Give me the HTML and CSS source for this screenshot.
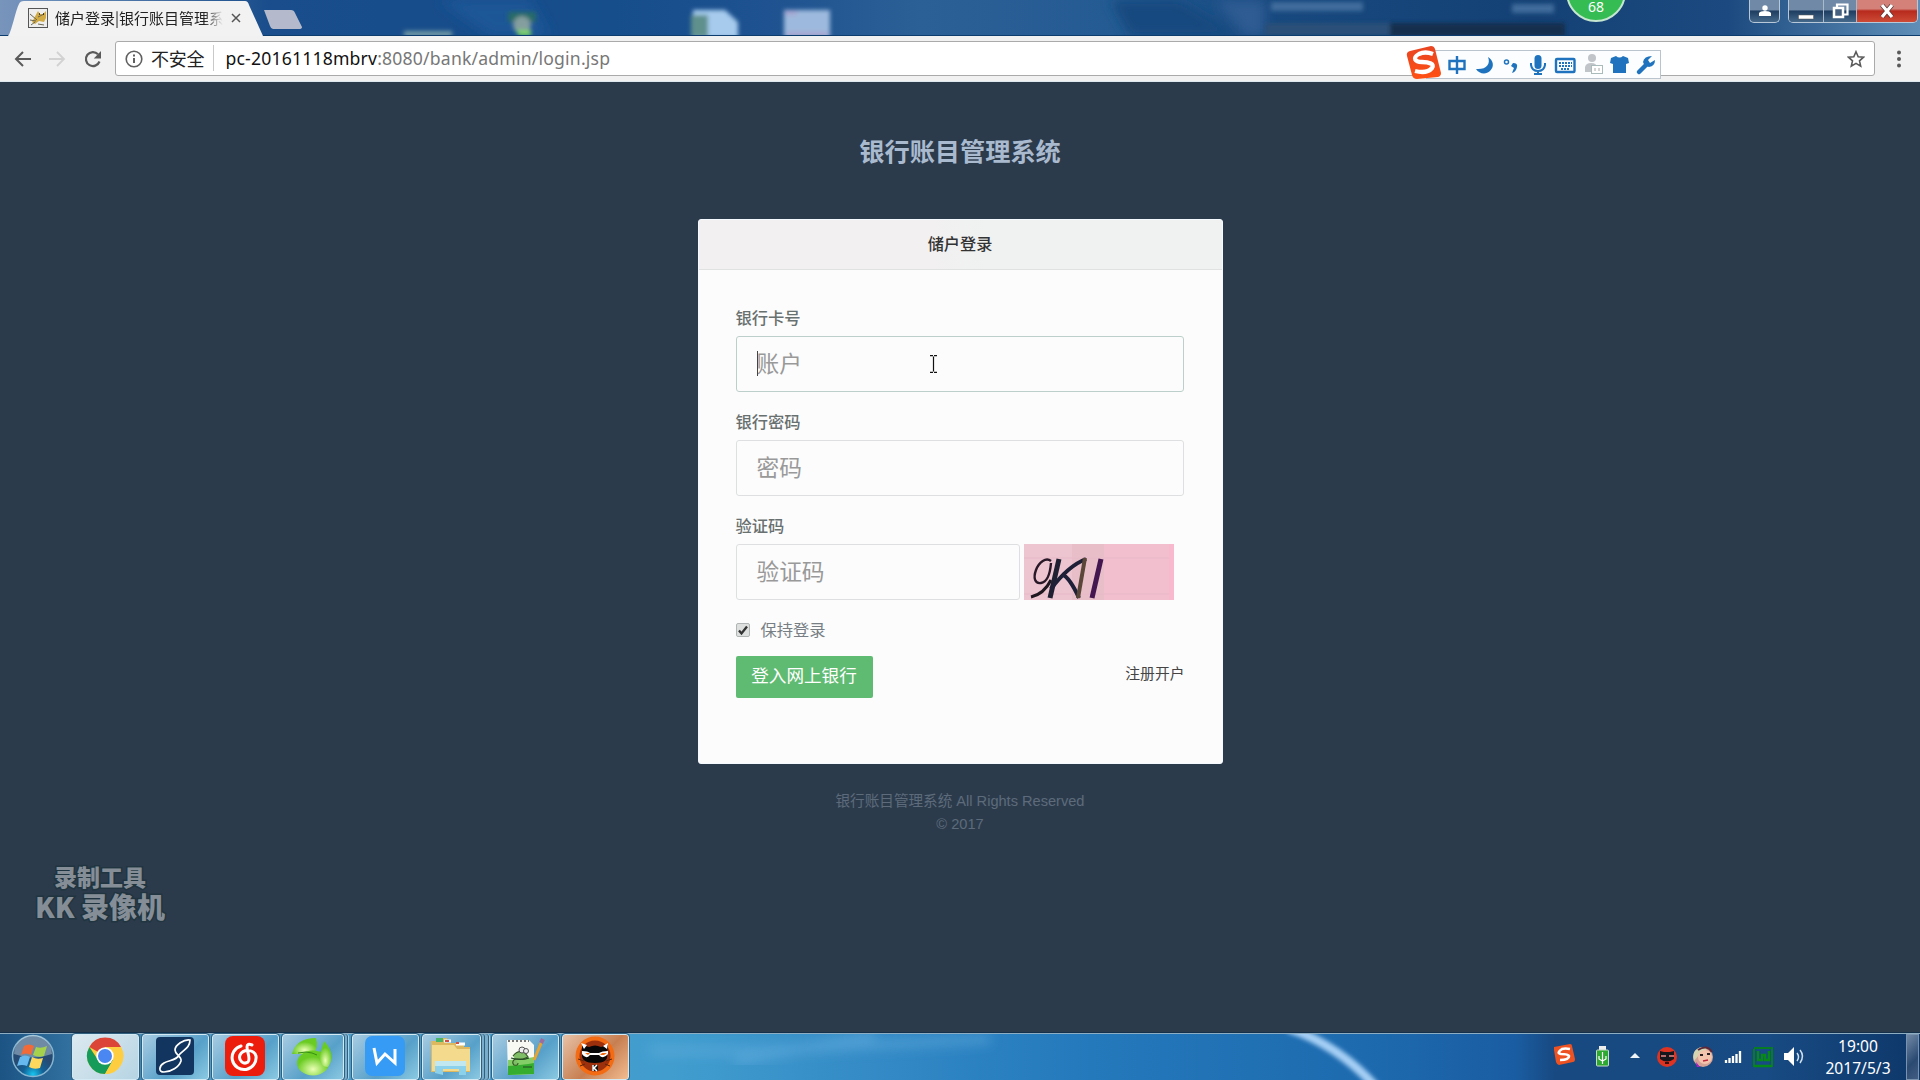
FILE: index.html
```html
<!DOCTYPE html>
<html lang="zh-CN">
<head>
<meta charset="utf-8">
<title>储户登录|银行账目管理系统</title>
<link rel="stylesheet" href="styles.css">
</head>
<body>
<header class="tabstrip">
  <svg class="strip-art" width="1920" height="36" viewBox="0 0 1920 36">
    <defs>
      <linearGradient id="sky"><stop offset="0" stop-color="#7894bb"/><stop offset=".02" stop-color="#6c8eba"/><stop offset=".14" stop-color="#194d8b"/><stop offset=".32" stop-color="#164d8b"/><stop offset=".4" stop-color="#1e5290"/><stop offset=".48" stop-color="#2b6096"/><stop offset=".58" stop-color="#245b92"/><stop offset=".66" stop-color="#17497f"/><stop offset=".8" stop-color="#144175"/><stop offset=".9" stop-color="#1c4a80"/><stop offset="1" stop-color="#5f8fb8"/></linearGradient>
      <filter id="soft"><feGaussianBlur stdDeviation="2"/></filter>
      <filter id="softer"><feGaussianBlur stdDeviation="6"/></filter>
    </defs>
    <rect width="1920" height="36" fill="url(#sky)"/>
    <g filter="url(#softer)">
      <path d="M440 0h90l20 36h-60z" fill="#1d5797"/>
      <path d="M1110 0h70l60 36h-110z" fill="#12497f"/>
      <path d="M1215 0h50v36h-20z" fill="#2d5b93"/>
    </g>
    <g filter="url(#soft)">
      <rect x="404" y="31" width="48" height="6" fill="#7098a5"/>
      <rect x="508" y="12" width="28" height="10" fill="#286a68"/>
      <circle cx="522" cy="25" r="9" fill="#849e9f"/>
      <path d="M516 30h15v6h-12z" fill="#7bd267"/>
      <path d="M693 10h32l13 12v16h-45z" fill="#a6cbed"/>
      <path d="M691 15h17v22h-17z" fill="#5f908c"/>
      <rect x="784" y="10" width="46" height="28" fill="#9db9dd"/>
      <path d="M785 13h12M786 34h42" stroke="#ae9ccc" stroke-width="3"/>
      <path d="M1271 2h92v9h-92zM1512 4h42v9h-42z" fill="#3f6c9b"/>
      <rect x="1265" y="23" width="125" height="13" fill="#2a5078"/>
      <rect x="1390" y="23" width="175" height="14" fill="#152d4e"/>
    </g>
    <rect y="35" width="1920" height="1" fill="#0d3d6f"/>
    <path d="M8 36C11 34 16 9 19 4Q20 1 24 1H245Q248 1 249 5L263 36z" fill="#f2f2f2"/>
    <path d="M264 10h27q3 0 4 3l7 14q0 2-3 2h-26q-2 0-3-3z" fill="#b4bacb"/>
  </svg>
  <div class="tab">
    <svg width="20" height="20" viewBox="0 0 20 20"><rect x=".5" y=".5" width="19" height="19" fill="#eee" stroke="#555"/><path d="M10 3l2 3h3l3-3v7l-2 4-5-1-4 3-3-2z" fill="#d3ab45"/><path d="M2 6l7 6M2 12l6 1M3 17l4-3M10 16l6 1M10 9l6-3" fill="none" stroke="#6a6650"/><path d="M11 6h1M15 6h1" stroke="#222" stroke-width="1.500"/></svg>
    <span class="tab-title">储户登录|银行账目管理系</span>
    <svg class="tab-close" width="10" height="10" viewBox="0 0 10 10"><path d="M1 1l8 8M9 1l-8 8" stroke="#555" stroke-width="1.5"/></svg>
  </div>
  <div class="ball">68</div>
  <div class="window-buttons">
    <div class="wb user"><svg width="12" height="12" viewBox="0 0 12 12"><circle cx="6" cy="3" r="2.7" fill="#fff"/><path d="M0 11V8q1-2 6-2t6 2v3z" fill="#fff"/></svg></div>
    <div class="wb-group">
      <div class="wb min"><svg width="16" height="12" viewBox="0 0 16 12"><rect x=".5" y="7" width="15" height="4" fill="#fff" stroke="#555" stroke-width=".5"/></svg></div>
      <div class="wb restore"><svg width="17" height="16" viewBox="0 0 17 16"><path d="M5 4V1.5h10.5v10H12" fill="none" stroke="#fff" stroke-width="2.2"/><rect x="2" y="5" width="9" height="9" fill="#45617f" stroke="#fff" stroke-width="2.5"/></svg></div>
      <div class="wb close"><svg width="16" height="14" viewBox="0 0 16 14"><path d="M3 1l10 12M13 1L3 13" stroke="#533" stroke-width="4.6"/><path d="M3 1l10 12M13 1L3 13" stroke="#fff" stroke-width="3.2"/></svg></div>
    </div>
  </div>
</header>
<nav class="toolbar">
  <svg width="18" height="16" viewBox="0 0 18 16"><path d="M17 8H2M9 1L2 8l7 7" fill="none" stroke="#5a5a5a" stroke-width="2"/></svg>
  <svg class="forward" width="18" height="16" viewBox="0 0 18 16"><path d="M1 8h15M9 1l7 7-7 7" fill="none" stroke="#d2d2d2" stroke-width="1.8"/></svg>
  <svg class="reload" width="18" height="18" viewBox="0 0 18 18"><path d="M15.5 11.5A7 7 0 1 1 14 4.2" fill="none" stroke="#5a5a5a" stroke-width="2.2"/><path d="M17 1v7.5H9.8z" fill="#5a5a5a"/></svg>
  <div class="address">
    <svg width="18" height="18" viewBox="0 0 18 18"><circle cx="9" cy="9" r="7.8" fill="none" stroke="#606060" stroke-width="1.6"/><path d="M9 8v5M9 4.5v2" stroke="#606060" stroke-width="2"/></svg>
    <span class="insecure">不安全</span>
    <span class="url"><b>pc-20161118mbrv</b>:8080/bank/admin/login.jsp</span>
    <svg class="star" width="18" height="18" viewBox="0 0 18 18"><path d="M9 1.7l2.2 5 5.3.5-4 3.6 1.2 5.4L9 13.4l-4.7 2.8 1.2-5.4-4-3.6 5.3-.5z" fill="none" stroke="#5a5a5a" stroke-width="1.6"/></svg>
  </div>
  <svg class="menu-dots" width="4" height="18" viewBox="0 0 4 18"><g fill="#5a5a5a"><circle cx="2" cy="2.5" r="2"/><circle cx="2" cy="9" r="2"/><circle cx="2" cy="15.5" r="2"/></g></svg>
  <div class="ime">
    <svg width="256" height="36" viewBox="0 0 256 36">
      <defs><linearGradient id="sg" x2="0" y2="1"><stop stop-color="#e84522" offset="0"/><stop stop-color="#ff5014" offset="1"/></linearGradient></defs>
      <rect x="20.500" y="5.500" width="234" height="28" fill="#fbfdff" stroke="#b9c4cf"/>
      <path d="M4 6L25 1q3 0 4 3l6 24q0 3-3 4L11 34q-4 0-5-4L1 11q-1-4 3-5z" fill="url(#sg)"/>
      <path d="M27 9q-8-3-14 0c-7 4-4 8 3 8s13 2 10 6q-5 6-17 3" fill="none" stroke="#fff" stroke-width="4.300"/>
      <g fill="none" stroke="#1f73be" stroke-width="2.400">
        <path d="M43.500 16h15v8h-15zM51 11v18"/>
        <path d="M125 18v2q1 6 7 6t7-6v-2M132 26v3M128 29h8" stroke-width="2"/>
        <rect x="150" y="14" width="18.500" height="13" rx="1"/>
      </g>
      <path d="M82 12c3 7-2 13-12 12 3 5 10 6 14 2 5-5 3-11-2-14z" fill="#1f73be"/>
      <circle cx="100.500" cy="17" r="2" fill="none" stroke="#1f73be" stroke-width="1.500"/><path d="M107 18q5 0 4 4-1 5-5 6l2-5-3-2z" fill="#1f73be"/>
      <rect x="128.500" y="10" width="7" height="14" rx="3.500" fill="#1f73be"/>
      <path d="M153 18h13M153 21h13M155 24h9" stroke="#1f73be" stroke-width="2" stroke-dasharray="2 1"/>
      <circle cx="186" cy="13" r="4" fill="#c1c4c9"/><path d="M179 27v-5q1-4 6-4 6 0 6 5v4z" fill="#c1c4c9"/><rect x="185.500" y="20.500" width="11" height="8" fill="#fff" stroke="#abb"/><path d="M189 23v3M193 23v3" stroke="#aaa"/>
      <path d="M205 13l5-2q3.500 3 7 0l5 2 1 5-3 1v9h-13v-9l-3-1z" fill="#1f73be"/>
      <path d="M233 27l8-8" stroke="#1f73be" stroke-width="4.500" stroke-linecap="round"/><path d="M246 11l-4 4 2 3 5-3q0 6-6 7-5-1-6-5 1-6 9-6z" fill="#1f73be"/>
    </svg>
  </div>
</nav>
<main class="page">
  <h1>银行账目管理系统</h1>
  <section class="card">
    <div class="card-head">储户登录</div>
    <form class="card-body">
      <label class="field-label">银行卡号</label>
      <div class="field focused"><i class="caret"></i>账户
        <svg class="ibeam" width="9" height="18" viewBox="0 0 9 18"><path d="M1 .7h3M5 .7h3M4.500 1.500v15M1 17.300h3M5 17.300h3" stroke="#111" stroke-width="1.200"/></svg>
      </div>
      <label class="field-label">银行密码</label>
      <div class="field">密码</div>
      <label class="field-label">验证码</label>
      <div class="code-row">
        <div class="field">验证码</div>
        <svg width="150" height="56" viewBox="0 0 150 56"><rect width="150" height="56" fill="#f2bfce"/><path d="M0 0h78v56H0z" fill="#ecc5d0"/><path d="M48 0h32v56H48z" fill="#e8bfc8"/><path d="M0 14h150M0 50h150" fill="none" stroke="#e8b8c8"/><path d="M145 0h5v56h-5z" fill="#f8b8cd"/>
          <path d="M27 17C22 13 15 18 12 26S11 40 17 39s9-8 10-20" fill="none" stroke="#291827" stroke-width="2.400"/><path d="M7 53Q20 50 27 36" fill="none" stroke="#201820" stroke-width="3"/><path d="M35 15L26 54" stroke="#202033" stroke-width="5"/><path d="M62 15Q44 22 27 45M38 30Q46 34 55 54" fill="none" stroke="#1e2038" stroke-width="4"/><path d="M61 14L54 54" stroke="#5a4638" stroke-width="4"/><path d="M77 15L68 54" stroke="#431650" stroke-width="5"/></svg>
      </div>
      <div class="remember"><svg width="14" height="14" viewBox="0 0 14 14"><rect x=".5" y=".5" width="13" height="13" rx="1.500" fill="#dedfdf" stroke="#b2b5b5"/><path d="M3 7.500l2.500 3L11 3.500" fill="none" stroke="#333" stroke-width="2.300"/></svg><span>保持登录</span></div>
      <div class="actions"><div class="submit">登入网上银行</div><a class="register">注册开户</a></div>
    </form>
  </section>
  <footer class="copyright"><div class="rights">银行账目管理系统 All Rights Reserved</div><div>© 2017</div></footer>
  <div class="watermark"><div class="wm-small">录制工具</div><div class="wm-big">KK 录像机</div></div>
</main>
<div class="taskbar">
  <svg class="bar-art" width="1920" height="48" viewBox="0 0 1920 48">
    <defs><linearGradient id="bar"><stop offset="0" stop-color="#1c5484"/><stop offset=".035" stop-color="#306f9e"/><stop offset=".1" stop-color="#4f9cc7"/><stop offset=".35" stop-color="#419dce"/><stop offset=".45" stop-color="#348bc6"/><stop offset=".56" stop-color="#247abc"/><stop offset=".72" stop-color="#1d69ae"/><stop offset=".79" stop-color="#1a5ca1"/><stop offset=".81" stop-color="#184981"/><stop offset=".92" stop-color="#184b83"/><stop offset="1" stop-color="#0d376a"/></linearGradient></defs>
    <rect width="1920" height="48" fill="url(#bar)"/>
    <path d="M735 30L875 2M650 19h100l240-12" fill="none" stroke="#66afe0" stroke-opacity=".5" stroke-width="9" filter="url(#softer)"/>
    <path d="M1288 -4Q1338 13 1375 54" fill="none" stroke="#a5cff5" stroke-width="9" filter="url(#soft)"/>
    <rect width="1920" height="1" fill="#14304b"/><rect y="1" width="1920" height="1" fill="#8eadc1"/>
  </svg>
  <div class="launch">
    <svg class="orb" width="44" height="44" viewBox="0 0 44 44"><defs><radialGradient id="orb" cy=".95"><stop offset="0" stop-color="#17c5ef"/><stop offset=".5" stop-color="#126197"/><stop offset="1" stop-color="#264a72"/></radialGradient></defs><circle cx="22" cy="22" r="20.500" fill="url(#orb)" stroke="#86b5d0" stroke-width="1.500"/><path d="M3 20a19 19 0 0 1 38 0q-19 7-38 0z" fill="#dceaf1" opacity=".4"/><path d="M13 12q5-3 10 0l-3 9q-5-3-10 0z" fill="#f26a37"/><path d="M25 13q5 2 11-1l-3 10q-6 2-11-1z" fill="#a5d14c"/><path d="M9 23q5-3 10 0l-3 9q-5-2-10 0z" fill="#66b9ee"/><path d="M21 23q5 3 11 1l-3 10q-6 2-11-1z" fill="#fed85c"/></svg>
    <div class="task active"><svg width="38" height="38" viewBox="0 0 38 38"><circle cx="19" cy="19" r="18" fill="#ffce40"/><path d="M19 19L3.400 10A18 18 0 0 1 35 10H19z" fill="#db4437"/><path d="M3.400 10A18 18 0 0 0 19 37l8-14-15 0z" fill="#169b59"/><path d="M19 10h16A18 18 0 0 1 19 37l8-14z" fill="#ffce40"/><circle cx="19" cy="19" r="8.700" fill="#fff"/><circle cx="19" cy="19" r="7" fill="#4a87f2"/></svg></div>
    <div class="task"><svg width="38" height="38" viewBox="0 0 38 38"><rect width="38" height="38" rx="4" fill="#12355f"/><path d="M34 3C28 2 19 8 19 13c0 5 7 6 6 11-2 6-10 11-17 11-6 0-5-6 0-9 5-3 12-2 15-8 4-5 11-7 11-15z" fill="none" stroke="#fff" stroke-width="1.700"/></svg></div>
    <div class="task"><svg width="40" height="40" viewBox="0 0 40 40"><rect width="40" height="40" rx="8" fill="#ed1d0d"/><path d="M16 10A12 12 0 1 0 31 20c-2-7-13-7-16-1-2 6 4 10 8 7 3-3-1-10-1-15q0-4 5-2" fill="none" stroke="#fff" stroke-width="3" stroke-linecap="round"/></svg></div>
    <div class="task stacked"><svg width="40" height="40" viewBox="0 0 40 40"><defs><radialGradient id="lime" cy=".75"><stop stop-color="#eaffb5"/><stop offset="1" stop-color="#6acb22"/></radialGradient></defs><path d="M0 18Q4 2 24 2q3 10-3 16Z" fill="url(#lime)"/><ellipse cx="21" cy="27" rx="16" ry="12.500" fill="url(#lime)"/><path d="M32 5q13 14 4 26-8 0-9-10z" fill="url(#lime)"/><path d="M6 17Q15 15 20 17l5 2" fill="none" stroke="#368d13"/></svg></div>
    <div class="task"><svg width="40" height="40" viewBox="0 0 40 40"><rect width="40" height="40" rx="7" fill="#369bf5"/><path d="M9 12l3 15 8-9 10 9V13" fill="none" stroke="#fff" stroke-width="3"/></svg></div>
    <div class="task stacked double"><svg width="40" height="40" viewBox="0 0 40 40"><path d="M0 5h6l2-3h8v5h17v4h6v25H0z" fill="#ddb85f"/><path d="M5 2h7v4H5z" fill="#49b568"/><path d="M13 5h7M25 8h9" stroke="#fff" stroke-width="3"/><path d="M14 5h4M25 7h3" stroke="#d35044" stroke-width="2"/><path d="M1 9h22l3 4h13v22H1z" fill="#f3da8d"/><path d="M4 37V25h31v14h-7v-6H12v6z" fill="#8bd1ec"/><path d="M4 25h31v5H4z" fill="#c1e7f0"/></svg></div>
    <div class="task"><svg width="40" height="40" viewBox="0 0 40 40"><path d="M2 4h22l5 5v29l-26 1z" fill="#f8f9f3"/><path d="M3 24q15-1 26-3v17l-26 1z" fill="#83ce66"/><path d="M3 30q15-1 26-3v11l-26 1z" fill="#36ad2f"/><path d="M3 5h21" stroke="#777" stroke-width="2" stroke-dasharray="2 2"/><path d="M8 20q5-7 12-3l3 4-5 2H10q-4 3-1 6 4 1 4-2" fill="#80bd67" stroke="#345a25" stroke-width="1.200"/><path d="M6 22q10 3 18 0M18 31h9" fill="none" stroke="#254a25" stroke-width="1.200"/><circle cx="17" cy="14" r="3" fill="#eee" stroke="#555"/><circle cx="21" cy="15" r="2.500" fill="#eee" stroke="#555"/><path d="M29 24L37 5" stroke="#e9a32f" stroke-width="3"/><path d="M36 7l2-4" stroke="#996da0" stroke-width="4"/></svg></div>
    <div class="task recorder"><svg width="40" height="40" viewBox="0 0 40 40"><circle cx="20" cy="20" r="19.500" fill="#f36b12"/><circle cx="20" cy="20" r="15.500" fill="#9d300c"/><path d="M7 9l7 2q6-3 12 0l7-2-1 9q2 9-12 9T7 18z" fill="#080808"/><path d="M6 7l6 2-3 4zM33 7l-5 3 4 3z" fill="#fff"/><path d="M7 15q6 0 8 2h9q3-2 9-2v3q-5 6-9 1h-9q-4 5-8-1z" fill="#fff"/><path d="M10 17h5l-2 2zM25 19l2-2h5l-3 2z" fill="#f36b12"/><path d="M17 29h6v6h-6z" fill="#1b1512"/><path d="M18 29v6M22 29l-3 3 3 3" stroke="#fff" stroke-width="1.500" fill="none"/><path d="M3 23l6 2M37 23l-6 2M5 30l5-2M35 30l-5-2" stroke="#5e260c"/></svg></div>
  </div>
  <div class="tray">
    <svg width="256" height="30" viewBox="0 0 256 30">
      <path d="M0 7l16-3q2 0 2 2l3 13q0 3-2 3L5 25q-2 0-3-3L0 10z" fill="#ed5222"/><path d="M16 9q-5-1-8 0-6 4-1 5 7 0 8 2 0 4-9 4" fill="none" stroke="#fff" stroke-width="2.700"/>
      <rect x="45" y="6" width="7" height="4" fill="#eee"/><rect x="42.500" y="10" width="12" height="16" rx="1" fill="#2da932" stroke="#c8dbc6"/><path d="M48.500 12v12M45 16v3l3.500 2 3.500-2v-3" fill="none" stroke="#fff" stroke-width="1.200"/>
      <path d="M76 18l5-5 5 5z" fill="#eef4f8"/>
      <circle cx="113" cy="17" r="10" fill="#df3321"/><path d="M106 11l4 1h6l4-1v8q-7 5-14 0z" fill="#15171d"/><path d="M107 16h5M115 16h5" stroke="#e88" stroke-width="1.500"/><path d="M111 23h4" stroke="#311" stroke-width="2"/>
      <circle cx="149" cy="17" r="10" fill="#d5a395"/><path d="M140 21q-3-12 8-14l5 2-8 6z" fill="#d4d6b2"/><circle cx="151" cy="17" r="7" fill="#f3c5ad"/><path d="M146 15h3M153 14h3" stroke="#292225" stroke-width="2"/><path d="M149 21l5-1" stroke="#bd273b" stroke-width="1.500"/><path d="M142 22l4 5h-3z" fill="#b417c6"/><path d="M144 10q9-6 14 2" fill="none" stroke="#5b2939" stroke-width="2"/>
      <path d="M172 20v3M175.500 18v5M179 16v7M182.500 14v9M186 11v12" stroke="#fff" stroke-width="2.300"/>
      <path d="M200 8h18v18h-18V9" fill="none" stroke="#087c23" stroke-width="2"/><path d="M204 11v9h4v-5h3v5h4v-9M200 26h18" fill="none" stroke="#078819" stroke-width="2.500"/>
      <path d="M230 13h4l6-6v19l-6-6h-4z" fill="#fff"/><path d="M243 13q3 4 0 8M246 10q5 6 0 13" fill="none" stroke="#cfdfeb" stroke-width="1.500"/>
    </svg>
    <div class="clock"><div>19:00</div><div>2017/5/3</div></div>
    <div class="show-desktop"></div>
  </div>
</div>
</body>
</html>
```
FILE: styles.css
```css
* { box-sizing: border-box; }
body {
  margin: 0;
  width: 1920px;
  height: 1080px;
  overflow: hidden;
  display: flex;
  flex-direction: column;
  font-family: "Liberation Sans", "Noto Sans CJK SC", sans-serif;
  background: #2c3b4c;
}
svg { display: block; flex: none; }

/* browser chrome */
.tabstrip { position: relative; height: 36px; display: flex; justify-content: space-between; }
.strip-art, .bar-art { position: absolute; left: 0; top: 0; }
.tab { position: relative; width: 263px; padding: 0 22px 0 28px; display: flex; align-items: center; color: #222; }
.tab-title {
  width: 172px; margin-left: 7px; margin-right: auto;
  white-space: nowrap;
  font: 15px/24px "Noto Sans CJK SC", sans-serif;
  -webkit-mask-image: linear-gradient(90deg, #000 149px, transparent 168px);
  mask-image: linear-gradient(90deg, #000 149px, transparent 168px);
}
.ball {
  position: absolute; left: 1566px; top: -38px; width: 60px; height: 60px;
  border-radius: 50%; border: 2px solid #c5e7d1; background: #35bc52;
  color: #fff; text-align: center; font: 14px/86px "Noto Sans", sans-serif;
}
.window-buttons { position: relative; display: flex; align-items: flex-start; gap: 8px; padding-right: 2px; }
.wb { display: flex; align-items: center; justify-content: center; height: 22px; background: linear-gradient(#7089a6 45%, #1e3d60 50%, #45698a); }
.user { width: 31px; height: 23px; border: 1px solid #b8c8d8; border-top: 0; border-radius: 0 0 5px 5px; }
.wb-group { display: flex; height: 23px; border: 1px solid #b8c8d8; border-top: 0; border-radius: 0 0 5px 5px; overflow: hidden; }
.min { width: 35px; border-right: 1px solid #aabacb; }
.min svg { margin-top: 6px; }
.restore { width: 33px; border-right: 1px solid #aabacb; }
.close { width: 60px; background: linear-gradient(#d4817a 40%, #b72a1d 50%, #cd4b36); }

.toolbar { position: relative; height: 46px; display: flex; align-items: center; padding: 0 19px 0 14px; background: #f1f1f1; border-bottom: 1px solid #dfe8ef; }
.forward { margin-left: 16px; }
.reload { margin-left: 18px; }
.address { width: 1760px; height: 35px; margin-left: 13px; padding: 0 9px; display: flex; align-items: center; background: #fff; border: 1px solid #aaa; border-radius: 3px; }
.insecure { margin: -2px 0 0 8px; padding-right: 9px; border-right: 1px solid #c9c9c9; color: #222; font: 18px/26px "Noto Sans CJK SC", sans-serif; letter-spacing: -.2px; }
.url { margin: -2px 0 0 11px; color: #777; font: 17.6px/26px "Noto Sans", sans-serif; letter-spacing: .19px; }
.url b { font-weight: 400; color: #111; }
.star { margin-left: auto; }
.menu-dots { margin-left: auto; }
.ime { position: absolute; left: 1406px; top: 9px; }

/* login page */
.page { position: relative; flex: 1; display: flex; flex-direction: column; align-items: center; background: #2c3b4c; }
h1 { margin: 48px 0 49px; color: #a9bacf; font: bold 25.2px/40px "Noto Sans CJK SC", sans-serif; }
.card { width: 525px; height: 545px; border-radius: 3px; overflow: hidden; background: #fcfcfc; border: 1px solid #f4faff; }
.card-head { height: 50px; background: linear-gradient(90deg, #f2f0f1 45%, #eff2f1 55%); border-bottom: 1px solid #e0e1e1; text-align: center; color: #333; font: 500 16.2px/47px "Noto Sans CJK SC", sans-serif; }
.card-body { padding: 35px 38px 0 37px; display: flex; flex-direction: column; }
.field-label { height: 24px; margin-bottom: 7px; color: #697070; font: 500 16.3px/24px "Noto Sans CJK SC", sans-serif; }
.field { position: relative; height: 56px; margin-bottom: 17px; padding-left: 20px; border: 1px solid #dedfe0; border-radius: 3px; color: #999; font: 22.7px/51px "Noto Sans CJK SC", sans-serif; }
.focused { border-color: #bccfca; }
.caret { position: absolute; left: 20px; top: 14px; width: 1px; height: 25px; background: #444; }
.ibeam { position: absolute; left: 192px; top: 18px; }
.code-row { display: flex; gap: 4px; }
.code-row .field { width: 284px; margin: 0; }
.remember { height: 26px; margin-top: 17px; display: flex; align-items: center; gap: 11px; color: #777f85; font: 16.3px/26px "Noto Sans CJK SC", sans-serif; }
.remember span { margin-top: -3px; }
.actions { margin-top: 13px; display: flex; justify-content: space-between; }
.submit { width: 137px; height: 42px; border-radius: 2px; background: #60bb72; color: #fff; text-align: center; font: 17.6px/38px "Noto Sans CJK SC", sans-serif; }
.register { margin-right: -1px; color: #444; font: 14.8px/34px "Noto Sans CJK SC", sans-serif; }
.copyright { margin-top: 26px; text-align: center; color: #5d6b7b; font: 14.6px/23px "Liberation Sans", "Noto Sans CJK SC", sans-serif; }
.watermark { position: absolute; left: 30px; top: 782px; width: 140px; text-align: center; color: #858e97; font: 900 23px/24px "Noto Sans CJK SC", sans-serif; paint-order: stroke; -webkit-text-stroke: 3px #203540; }
.wm-big { margin-top: 4px; font-size: 28px; line-height: 28px; white-space: nowrap; }

/* taskbar */
.taskbar { position: relative; height: 48px; display: flex; justify-content: space-between; }
.launch { position: relative; display: flex; align-items: flex-end; gap: 3px; padding-left: 11px; }
.orb { margin: 0 14px 2px 0; }
.task { width: 67px; height: 46px; padding: 0 2px 2px 0; display: flex; align-items: center; justify-content: center; border: 1px solid #d3e9f4; outline: 1px solid #315f7e; border-radius: 3px; background: linear-gradient(135deg, #a7cbe2, #57a0c9 60%, #8bc9e2); }
.active { background: linear-gradient(135deg, #dce9f0, #b6d4e3); }
.stacked { width: 62px; margin-right: 5px; box-shadow: 3px 0 #78aecb, 4px 0 #315f7e, 5px 0 #afd0e2; }
.double { width: 59px; margin-right: 8px; box-shadow: 3px 0 #78aecb, 4px 0 #315f7e, 7px 0 #78aecb, 8px 0 #315f7e, 9px 0 #afd0e2; }
.recorder { background: linear-gradient(135deg, #e8c2a7, #c77f51 55%, #f1bc91); }
.tray { position: relative; display: flex; align-items: flex-start; }
.tray > svg { margin-top: 8px; }
.clock { width: 96px; padding-top: 3px; text-align: center; color: #fff; font: 15.6px/22px "Noto Sans", sans-serif; }
.show-desktop { width: 13px; height: 46px; margin: 2px 1px 0 0; border: 1px solid #7993ae; background: linear-gradient(135deg, #7189a6, #2b4a72 60%, #435d82); }
```
